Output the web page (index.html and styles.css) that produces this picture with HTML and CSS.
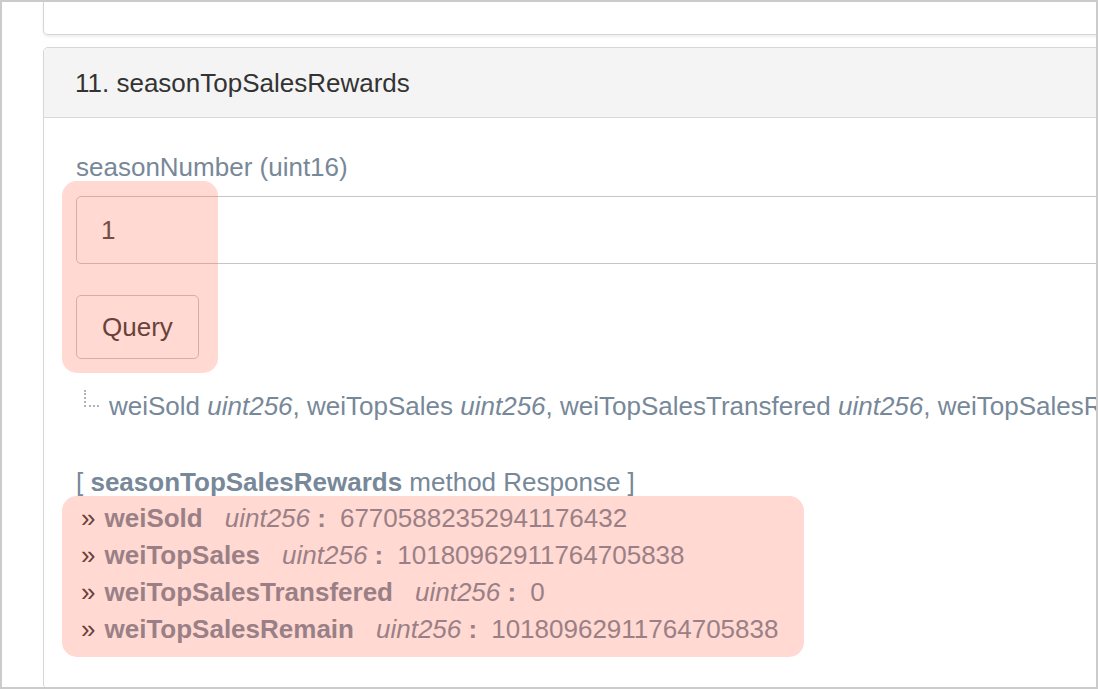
FILE: index.html
```html
<!DOCTYPE html>
<html>
<head>
<meta charset="utf-8">
<link rel="stylesheet" href="styles.css">
</head>
<body>
<div class="frame">
  <div class="stack">
    <div class="card card-prev"></div>
    <section class="card">
      <header class="card-head">11. seasonTopSalesRewards</header>
      <div class="card-body">
        <div class="field-label">seasonNumber (uint16)</div>
        <div class="field-wrap">
          <input class="input" type="text" value="1">
          <button class="btn">Query</button>
          <div class="mark mark-query"></div>
        </div>
        <div class="outputs"><span class="tree"></span><span class="out-text">weiSold <i>uint256</i>, weiTopSales <i>uint256</i>, weiTopSalesTransfered <i>uint256</i>, weiTopSalesRemain <i>uint256</i></span></div>
        <div class="response-title">[ <b>seasonTopSalesRewards</b> method Response ]</div>
        <ul class="results">
          <li><span class="arrow">»</span><b class="name">weiSold</b><i class="type">uint256</i> <b>:</b><span class="val">67705882352941176432</span></li>
          <li><span class="arrow">»</span><b class="name">weiTopSales</b><i class="type">uint256</i> <b>:</b><span class="val">10180962911764705838</span></li>
          <li><span class="arrow">»</span><b class="name">weiTopSalesTransfered</b><i class="type">uint256</i> <b>:</b><span class="val">0</span></li>
          <li><span class="arrow">»</span><b class="name">weiTopSalesRemain</b><i class="type">uint256</i> <b>:</b><span class="val">10180962911764705838</span></li>
        </ul>
      </div>
    </section>
  </div>
</div>
</body>
</html>
```
FILE: styles.css
```css
html, body {
  margin: 0;
  padding: 0;
  background: #fff;
}
body {
  font-family: "Liberation Sans", Arial, sans-serif;
  font-size: 26px;
}
.frame {
  width: 1098px;
  height: 689px;
  box-sizing: border-box;
  border: 2px solid #cbcbcb;
  overflow: hidden;
}
.stack {
  padding-left: 41px;
  margin-right: -400px;
}
.card {
  border: 1px solid #d6d6d6;
  border-radius: 5px;
  background: #fff;
}
.card-prev {
  height: 32px;
  border-top: 0;
  border-radius: 0 0 5px 5px;
  box-shadow: 0 2px 3px rgba(0, 0, 0, 0.07);
  margin-bottom: 12px;
}
.card-head {
  background: #f4f4f4;
  border-bottom: 1px solid #d9d9d9;
  border-radius: 5px 5px 0 0;
  padding: 18px 32px 16px 31px;
  line-height: 35px;
  color: #333;
}
.card-body {
  padding: 32px 0 40px 32px;
}
.field-label {
  line-height: 35px;
  color: #778899;
}
.field-wrap {
  position: relative;
  margin-top: 11px;
}
.input {
  display: block;
  box-sizing: border-box;
  width: 1100px;
  height: 68px;
  margin: 0;
  padding: 0 24px;
  border: 1px solid #c6c6c6;
  border-radius: 5px;
  font-family: inherit;
  font-size: 26px;
  color: #444;
  background: #fff;
  outline: none;
}
.btn {
  display: block;
  box-sizing: border-box;
  margin-top: 31px;
  height: 64px;
  padding: 0 25px;
  border: 1px solid #c6c6c6;
  border-radius: 5px;
  background: #fff;
  font-family: inherit;
  font-size: 26px;
  color: #333;
}
.mark {
  position: absolute;
  background: rgba(255, 110, 80, 0.26);
  border-radius: 15px;
  pointer-events: none;
}
.mark-query {
  left: -14px;
  top: -15px;
  width: 156px;
  height: 192px;
}
.outputs {
  margin-top: 29px;
  line-height: 37px;
  color: #778899;
  white-space: nowrap;
  display: flex;
  align-items: flex-start;
}
.tree {
  flex: none;
  width: 13px;
  height: 15px;
  margin: 2px 10px 0 8px;
  border-left: 2px dotted #b4b4b4;
  border-bottom: 2px dotted #b4b4b4;
}
.out-text {
  flex: none;
}
.response-title {
  margin-top: 39px;
  line-height: 36px;
  color: #778899;
}
.results {
  position: relative;
  list-style: none;
  margin: 0;
  padding: 0 0 0 5px;
  color: #778899;
}
.results::after {
  content: "";
  position: absolute;
  left: -14px;
  top: -4px;
  width: 742px;
  height: 161px;
  background: rgba(255, 110, 80, 0.26);
  border-radius: 15px;
}
.results li {
  line-height: 37px;
  white-space: nowrap;
}
.arrow {
  color: #333;
  margin-right: 9px;
}
.name {
  margin-right: 22px;
}
.val {
  margin-left: 14px;
}
```
